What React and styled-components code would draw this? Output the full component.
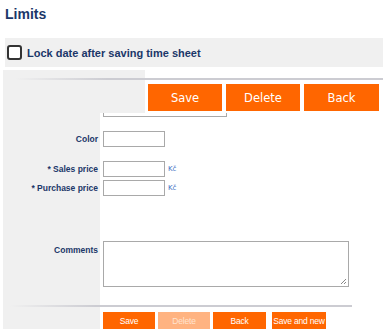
import React from 'react';
import styled, { createGlobalStyle } from 'styled-components';

const GlobalStyle = createGlobalStyle`
    html, body {
        margin: 0;
        padding: 0;
        background: #fff;
        font-family: 'Liberation Sans', Arial, sans-serif;
    }
`;

const Page = styled.div`
    width: 383px;
    height: 329px;
    overflow: hidden;
`;

const Title = styled.h1`
    margin: 0;
    padding: 6px 0 0 5px;
    height: 32px;
    box-sizing: border-box;
    font-size: 14px;
    font-weight: bold;
    color: #1b3769;
`;

const LockRow = styled.label`
    display: flex;
    align-items: center;
    gap: 5px;
    margin-left: 5px;
    margin-top: 6px;
    height: 29px;
    padding-left: 2px;
    background: #f0f0f0;
    font-size: 11px;
    font-weight: bold;
    color: #1b3769;
`;

const CheckBox = styled.span`
    width: 11px;
    height: 11px;
    border: 2px solid #333;
    border-radius: 3px;
    background: #fff;
`;

const FormWrap = styled.div`
    position: relative;
    margin-top: 3px;
`;

const Toolbar = styled.div`
    position: absolute;
    top: 0;
    left: 5px;
    right: 0;
    height: 43px;
    background: linear-gradient(to right, #f0f0f0 140px, #fff 140px);
    display: flex;
    flex-direction: column;
    z-index: 1;
`;

const Rule = styled.div`
    height: 2px;
    margin: ${(p) => p.$margin};
    width: ${(p) => p.$width || 'auto'};
    background: linear-gradient(to right, rgba(200, 200, 205, 0), #ccccd2 25%, #ccccd2);
`;

const ButtonRow = styled.div`
    display: flex;
    gap: ${(p) => p.$gap}px;
    justify-content: ${(p) => p.$justify || 'flex-start'};
    padding-left: ${(p) => p.$left || 0}px;
    padding-right: ${(p) => p.$right || 0}px;
    margin-top: ${(p) => p.$mt || 0}px;
`;

const Button = styled.button`
    width: ${(p) => p.$w}px;
    height: ${(p) => p.$h}px;
    margin-left: ${(p) => p.$ml || 0}px;
    padding: 0;
    border: none;
    background: ${(p) => (p.$disabled ? '#ffb381' : '#ff6600')};
    color: ${(p) => (p.$disabled ? '#ffe3cf' : '#fff')};
    font-family: ${(p) => (p.$small ? "'Liberation Sans', Arial" : "'DejaVu Sans', Tahoma")}, sans-serif;
    font-size: ${(p) => p.$fs}px;
    letter-spacing: ${(p) => (p.$small ? '-0.2px' : 'normal')};
    white-space: nowrap;
    cursor: pointer;
`;

const Form = styled.div`
    margin-left: 3px;
    background: linear-gradient(to right, #f0f0f0 97px, #fff 97px);
    height: 260px;
`;

const Row = styled.div`
    display: grid;
    grid-template-columns: 97px 1fr;
    column-gap: 3px;
    height: ${(p) => p.$h}px;
    margin-top: ${(p) => p.$mt || 0}px;
    align-items: ${(p) => p.$align || 'center'};
`;

const Label = styled.div`
    text-align: right;
    padding-right: 2px;
    padding-top: ${(p) => p.$pt || 0}px;
    font-size: 8.5px;
    font-weight: bold;
    color: #1b3769;
    white-space: nowrap;
`;

const Field = styled.div`
    display: flex;
    align-items: center;
    gap: 3px;
`;

const Input = styled.div`
    width: ${(p) => p.$w}px;
    height: 16px;
    box-sizing: border-box;
    border: 1px solid #a9a9a9;
    background: #fff;
`;

const TextArea = styled.div`
    position: relative;
    width: 246px;
    height: 46px;
    box-sizing: border-box;
    border: 1px solid #a9a9a9;
    background: #fff;
`;

const Grip = styled.svg`
    position: absolute;
    right: 1px;
    bottom: 1px;
`;

const Unit = styled.span`
    font-family: 'DejaVu Sans', Tahoma, sans-serif;
    font-size: 7px;
    color: #3f6fc4;
`;

const Footer = styled.div`
    padding-top: 2px;
`;

const App = () => (
    <Page>
        <GlobalStyle />
        <Title>Limits</Title>
        <LockRow>
            <CheckBox />
            Lock date after saving time sheet
        </LockRow>
        <FormWrap>
            <Toolbar>
                <Rule $margin="8px 0 0 10px" />
                <ButtonRow $gap={4} $justify="flex-end" $right={4} $mt={4}>
                    <Button $w={74} $h={27} $fs={11.5}>Save</Button>
                    <Button $w={74} $h={27} $fs={11.5}>Delete</Button>
                    <Button $w={75} $h={27} $fs={11.5}>Back</Button>
                </ButtonRow>
            </Toolbar>
            <Form>
                <Row $h={47} $align="end">
                    <Label />
                    <Field>
                        <Input $w={124} />
                    </Field>
                </Row>
                <Row $h={17} $mt={13}>
                    <Label>Color</Label>
                    <Field>
                        <Input $w={62} />
                    </Field>
                </Row>
                <Row $h={17} $mt={13}>
                    <Label>* Sales price</Label>
                    <Field>
                        <Input $w={62} />
                        <Unit>Kč</Unit>
                    </Field>
                </Row>
                <Row $h={17} $mt={2}>
                    <Label>* Purchase price</Label>
                    <Field>
                        <Input $w={62} />
                        <Unit>Kč</Unit>
                    </Field>
                </Row>
                <Row $h={62} $mt={45} $align="start">
                    <Label $pt={4}>Comments</Label>
                    <Field>
                        <TextArea>
                            <Grip width="7" height="7" viewBox="0 0 7 7">
                                <path d="M6 1 L1 6 M6 4 L4 6" stroke="#888" strokeWidth="1" />
                            </Grip>
                        </TextArea>
                    </Field>
                </Row>
                <Footer>
                    <Rule $margin="0 0 0 7px" $width="342px" />
                    <ButtonRow $gap={3} $mt={5} $left={100}>
                        <Button $w={52} $h={18} $fs={8.5} $small>Save</Button>
                        <Button $w={52} $h={18} $fs={8.5} $small $disabled>Delete</Button>
                        <Button $w={53} $h={18} $fs={8.5} $small>Back</Button>
                        <Button $w={54} $h={18} $fs={8.5} $small $ml={3}>Save and new</Button>
                    </ButtonRow>
                </Footer>
            </Form>
        </FormWrap>
    </Page>
);

export default App;
